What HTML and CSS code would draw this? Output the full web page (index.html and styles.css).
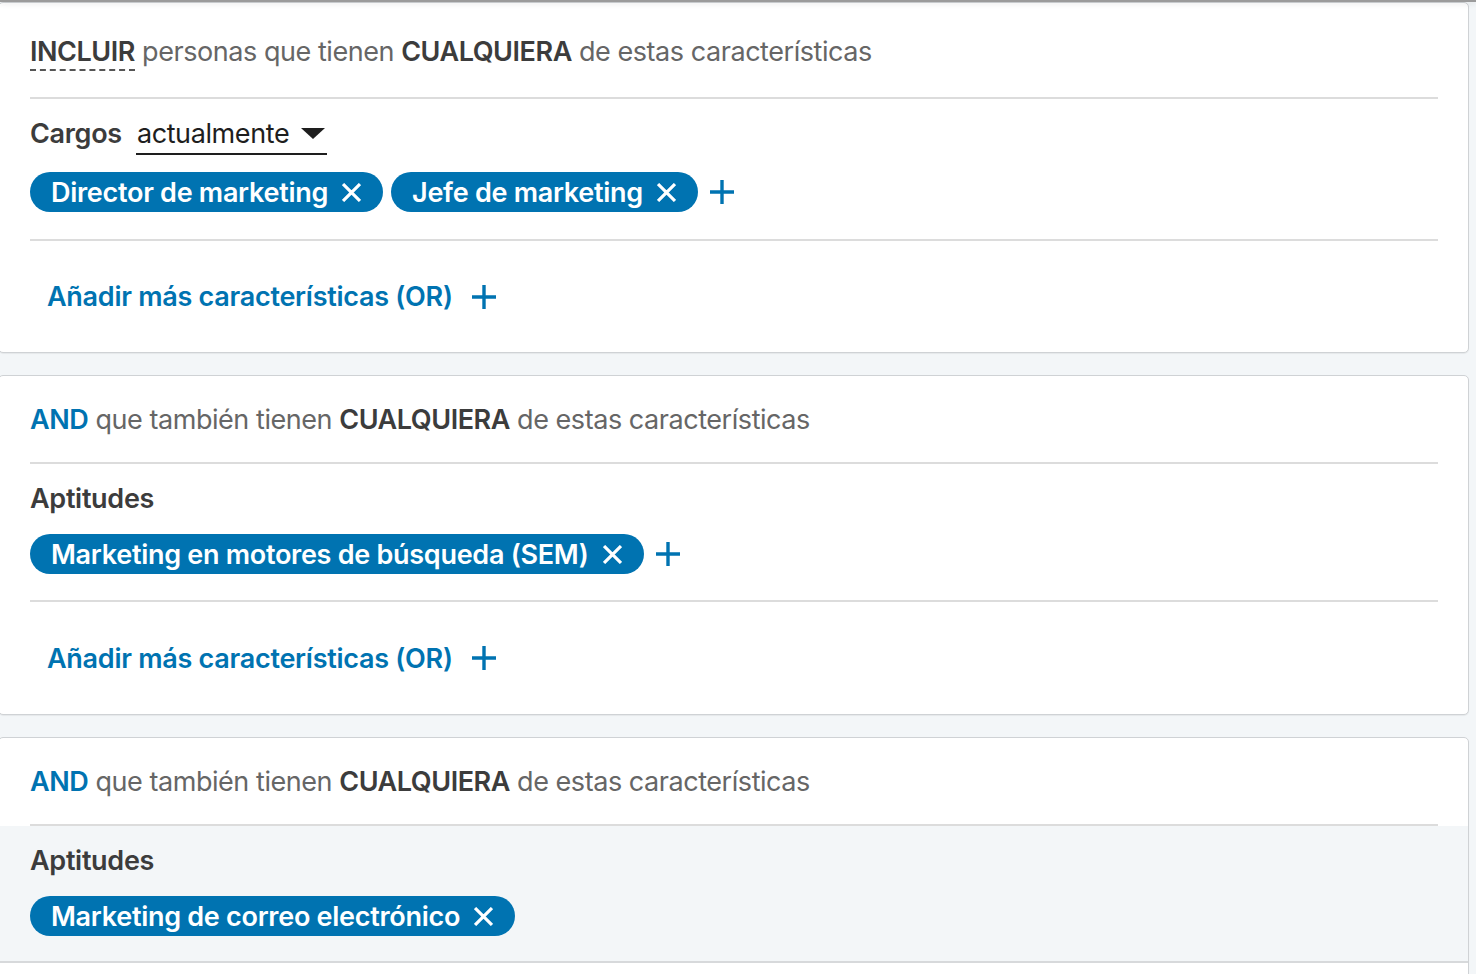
FILE: index.html
```html
<!DOCTYPE html>
<html lang="es">
<head>
<meta charset="utf-8">
<title>Filtros</title>
<link rel="stylesheet" href="styles.css">
</head>
<body>
<div class="topbar"></div>
<main class="list">
  <section class="card card-first">
    <header class="card-head">
      <span class="kw kw-dash">INCLUIR</span> personas que tienen <span class="kw">CUALQUIERA</span> de estas características
    </header>
    <div class="facet">
      <div class="facet-label facet-label-dd">
        <span>Cargos</span>
        <span class="dropdown">actualmente <span class="caret"></span></span>
      </div>
      <div class="chips">
        <span class="chip">Director de marketing <svg class="x" viewBox="0 0 18 18"><path d="M1 1L17 17M17 1L1 17"/></svg></span>
        <span class="chip">Jefe de marketing <svg class="x" viewBox="0 0 18 18"><path d="M1 1L17 17M17 1L1 17"/></svg></span>
        <svg class="plus" viewBox="0 0 24 24"><path d="M12 0V24M0 12H24"/></svg>
      </div>
    </div>
    <div class="add-row">
      <span class="add">Añadir más características (OR) <svg class="plus" viewBox="0 0 24 24"><path d="M12 0V24M0 12H24"/></svg></span>
    </div>
  </section>

  <section class="card">
    <header class="card-head">
      <span class="kw kw-blue">AND</span> que también tienen <span class="kw">CUALQUIERA</span> de estas características
    </header>
    <div class="facet">
      <div class="facet-label"><span>Aptitudes</span></div>
      <div class="chips">
        <span class="chip">Marketing en motores de búsqueda (SEM) <svg class="x" viewBox="0 0 18 18"><path d="M1 1L17 17M17 1L1 17"/></svg></span>
        <svg class="plus" viewBox="0 0 24 24"><path d="M12 0V24M0 12H24"/></svg>
      </div>
    </div>
    <div class="add-row">
      <span class="add">Añadir más características (OR) <svg class="plus" viewBox="0 0 24 24"><path d="M12 0V24M0 12H24"/></svg></span>
    </div>
  </section>

  <section class="card card-last">
    <header class="card-head">
      <span class="kw kw-blue">AND</span> que también tienen <span class="kw">CUALQUIERA</span> de estas características
    </header>
    <div class="facet facet-hover">
      <div class="facet-label"><span>Aptitudes</span></div>
      <div class="chips">
        <span class="chip">Marketing de correo electrónico <svg class="x" viewBox="0 0 18 18"><path d="M1 1L17 17M17 1L1 17"/></svg></span>
      </div>
    </div>
    <div class="add-row"></div>
  </section>
</main>
</body>
</html>
```

FILE: styles.css
```css
* { box-sizing: border-box; }

html, body {
  margin: 0;
  padding: 0;
  background: #f3f6f8;
  overflow: hidden;
  font-family: Inter, "Noto Sans", "Liberation Sans", sans-serif;
}

.topbar {
  position: fixed;
  top: 0;
  left: 0;
  right: 0;
  height: 2px;
  background: #f3f6f8;
  border-bottom: 2px solid #9b9b9b;
  box-shadow: 0 2px 5px rgba(0,0,0,0.12);
  z-index: 5;
}

.list {
  width: 1471px;
  margin-left: -2px;
  padding-top: 2px;
  display: flex;
  flex-direction: column;
  gap: 22px;
}

.card {
  background: #fff;
  border: 1px solid #cfd2d5;
  border-radius: 5px;
  box-shadow: 0 1px 1px rgba(0,0,0,0.06);
  overflow: hidden;
}

.card-head {
  margin: 0 30px 0 31px;
  padding: 24px 0 22px;
  line-height: 40px;
  font-size: 27px;
  color: #666;
  letter-spacing: -0.45px;
  border-bottom: 2px solid #dcdcdc;
}

.card-first .card-head { padding-top: 29px; padding-bottom: 25px; }

.kw { font-weight: 600; color: #3c3c3c; }
.kw-blue { color: #0073b1; }
.kw-dash {
  display: inline-block;
  line-height: 30px;
  padding-bottom: 2px;
  border-bottom: 2px dashed #555;
}

.facet {
  margin: 0 30px 0 31px;
  padding: 14px 0 26px;
  border-bottom: 2px solid #dcdcdc;
}

.facet-label {
  display: flex;
  align-items: center;
  gap: 14px;
  height: 40px;
  font-size: 27px;
  font-weight: 600;
  color: #3c3c3c;
  letter-spacing: -0.3px;
  margin-bottom: 16px;
}

.facet-label-dd { margin-bottom: 19px; }
.card-first .facet { padding-bottom: 27px; }

.dropdown {
  display: inline-flex;
  align-items: center;
  gap: 12px;
  font-weight: 400;
  color: #1e1e1e;
  height: 42px;
  padding: 0 2px 0 1px;
  border-bottom: 2px solid #1e1e1e;
  margin-top: 2px;
  letter-spacing: -0.4px;
}

.caret {
  width: 0;
  height: 0;
  border-left: 12px solid transparent;
  border-right: 12px solid transparent;
  border-top: 11px solid #1e1e1e;
}

.chips {
  display: flex;
  align-items: center;
  gap: 8px;
}

.chip {
  display: inline-flex;
  align-items: center;
  gap: 14px;
  height: 40px;
  padding: 0 22px 0 21px;
  border-radius: 20px;
  background: #0073b1;
  color: #fff;
  font-size: 27px;
  font-weight: 600;
  letter-spacing: -0.28px;
}

.x {
  width: 19px;
  height: 19px;
  fill: none;
  stroke: #fff;
  stroke-width: 3;
}

.plus {
  width: 24px;
  height: 24px;
  fill: none;
  stroke: #0073b1;
  stroke-width: 3.4;
}

.chips .plus { margin-left: 4px; }

.add-row {
  height: 111px;
  padding: 0 48px;
  display: flex;
  align-items: center;
}

.card + .card .add-row { height: 112px; }

.add {
  display: inline-flex;
  align-items: center;
  gap: 19px;
  color: #0073b1;
  font-size: 27px;
  font-weight: 600;
  letter-spacing: -0.27px;
}

.card-last .facet-hover {
  margin: 0;
  padding: 14px 30px 25px 31px;
  background: #f3f6f8;
  border-bottom: 2px solid #d7d9db;
}

.card-last .add-row { height: 60px; }
```
